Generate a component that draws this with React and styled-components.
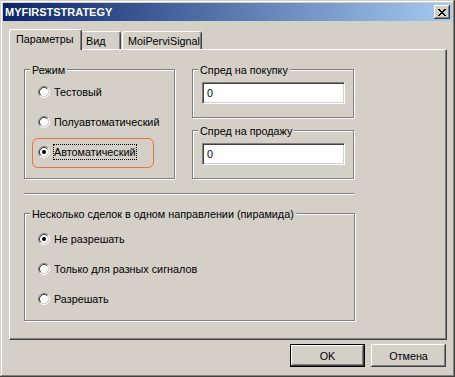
import React from 'react';
import styled, { createGlobalStyle } from 'styled-components';

const GlobalStyle = createGlobalStyle`
  html, body {
    margin: 0;
    padding: 0;
    background: #D4D0C8;
  }
  body {
    font-family: "Liberation Sans", "DejaVu Sans", Arial, sans-serif;
    font-size: 10.8px;
    color: #000;
  }
`;

const Window = styled.div`
  width: 455px;
  height: 377px;
  box-sizing: border-box;
  padding: 3px;
  background: #D4D0C8;
  display: flex;
  flex-direction: column;
  box-shadow: inset -1px -1px #404040, inset 1px 1px #D4D0C8,
    inset -2px -2px #808080, inset 2px 2px #fff;
`;

const TitleBar = styled.div`
  height: 18px;
  display: flex;
  align-items: center;
  justify-content: space-between;
  padding: 0 2px 0 2px;
  background: linear-gradient(to right, #0A246A, #A6CAF0);
`;

const Title = styled.span`
  color: #fff;
  font-weight: bold;
  font-size: 11px;
  line-height: 13px;
`;

const CloseBtn = styled.div`
  width: 16px;
  height: 14px;
  box-sizing: border-box;
  background: #D4D0C8;
  display: flex;
  align-items: center;
  justify-content: center;
  box-shadow: inset -1px -1px #404040, inset 1px 1px #fff,
    inset -2px -2px #808080;
`;

const Body = styled.div`
  display: flex;
  flex-direction: column;
  padding: 8px 5px 0 6px;
`;

const TabStrip = styled.div`
  display: flex;
  align-items: flex-end;
  height: 21px;
  margin-bottom: -1px;
  position: relative;
  z-index: 1;
`;

const Tab = styled.div`
  box-sizing: border-box;
  width: ${p => p.$w}px;
  height: ${p => (p.$active ? 21 : 18)}px;
  margin-bottom: ${p => (p.$active ? 0 : 1)}px;
  margin-right: ${p => p.$mr || 0}px;
  padding: 3px 0 0 ${p => (p.$active ? 6 : 5)}px;
  line-height: 13px;
  background: #D4D0C8;
  border-top: 1px solid #fff;
  border-left: 1px solid #fff;
  border-right: 1px solid #404040;
  border-radius: 3px 3px 0 0;
  box-shadow: inset -1px 0 #808080;
  position: relative;
  z-index: ${p => (p.$active ? 2 : 1)};
  white-space: nowrap;
`;

const Panel = styled.div`
  height: 291px;
  box-sizing: border-box;
  padding: 19px 0 0 14px;
  border-top: 1px solid #fff;
  border-left: 1px solid #fff;
  border-right: 1px solid #404040;
  border-bottom: 1px solid #404040;
  box-shadow: inset -1px -1px #808080;
  display: flex;
  flex-direction: column;
`;

const TopRow = styled.div`
  display: flex;
  gap: 17px;
`;

const Column = styled.div`
  display: flex;
  flex-direction: column;
  gap: 12px;
`;

const GroupBox = styled.div`
  position: relative;
  box-sizing: border-box;
  width: ${p => p.$w}px;
  height: ${p => p.$h}px;
  padding: ${p => p.$pad};
  border: 1px solid #808080;
  box-shadow: inset 1px 1px #fff, 1px 1px #fff;
`;

const Caption = styled.span`
  position: absolute;
  top: -6px;
  left: 5px;
  padding: 0 2px;
  line-height: 13px;
  background: #D4D0C8;
  white-space: nowrap;
`;

const RadioRow = styled.div`
  position: relative;
  display: flex;
  align-items: center;
  gap: 4px;
  height: 30px;
`;

const RadioLabel = styled.span`
  line-height: 13px;
  white-space: nowrap;
  padding-top: 1px;
  outline: ${p => (p.$focus ? '1px dotted #000' : 'none')};
`;

const Highlight = styled.div`
  position: absolute;
  left: -6px;
  top: 1px;
  width: 122px;
  height: 30px;
  box-sizing: border-box;
  border: 1.5px solid #F0703C;
  border-radius: 6px;
  pointer-events: none;
`;

const Field = styled.input`
  box-sizing: border-box;
  width: 143px;
  height: 22px;
  margin: 0;
  padding: 0 4px;
  font: inherit;
  color: #000;
  background: #fff;
  border-top: 1px solid #808080;
  border-left: 1px solid #808080;
  border-right: 1px solid #fff;
  border-bottom: 1px solid #fff;
  box-shadow: inset 1px 1px #404040, inset -1px -1px #D4D0C8;
  outline: none;
`;

const Separator = styled.div`
  width: 330px;
  height: 0;
  margin: 14px 0 18px;
  border-top: 1px solid #808080;
  border-bottom: 1px solid #fff;
`;

const ButtonRow = styled.div`
  display: flex;
  justify-content: flex-end;
  gap: 6px;
  margin-top: 4px;
  padding-right: 1px;
`;

const Button = styled.button`
  width: 75px;
  height: 23px;
  box-sizing: border-box;
  margin: 0;
  padding: 0;
  font: inherit;
  color: #000;
  background: #D4D0C8;
  border: ${p => (p.$default ? '1px solid #000' : 'none')};
  box-shadow: inset -1px -1px #404040, inset 1px 1px #fff,
    inset -2px -2px #808080;
`;

const X_PIXELS = [
  'XX....XX',
  '.XX..XX.',
  '..XXXX..',
  '...XX...',
  '..XXXX..',
  '.XX..XX.',
  'XX....XX',
];

function CloseIcon() {
  const rects = [];
  X_PIXELS.forEach((row, y) =>
    row.split('').forEach((c, x) => {
      if (c === 'X') rects.push(<rect key={`${x}-${y}`} x={x} y={y} width="1" height="1" />);
    })
  );
  return (
    <svg width="8" height="7" viewBox="0 0 8 7" shapeRendering="crispEdges" fill="#000">
      {rects}
    </svg>
  );
}

function RadioIcon({ checked }) {
  return (
    <svg width="12" height="12" viewBox="0 0 12 12">
      <circle cx="6" cy="6" r="4.2" fill="#fff" />
      <path d="M9.89 2.11 A5.5 5.5 0 0 0 2.11 9.89" fill="none" stroke="#808080" strokeWidth="1" />
      <path d="M2.11 9.89 A5.5 5.5 0 0 0 9.89 2.11" fill="none" stroke="#fff" strokeWidth="1" />
      <path d="M9.18 2.82 A4.5 4.5 0 0 0 2.82 9.18" fill="none" stroke="#404040" strokeWidth="1" />
      <path d="M2.82 9.18 A4.5 4.5 0 0 0 9.18 2.82" fill="none" stroke="#D4D0C8" strokeWidth="1" />
      {checked && <circle cx="6" cy="6" r="2" fill="#000" />}
    </svg>
  );
}

function Radio({ label, checked, focus, highlight }) {
  return (
    <RadioRow>
      <RadioIcon checked={checked} />
      <RadioLabel $focus={focus}>{label}</RadioLabel>
      {highlight && <Highlight />}
    </RadioRow>
  );
}

export default function App() {
  return (
    <>
      <GlobalStyle />
      <Window>
        <TitleBar>
          <Title>MYFIRSTSTRATEGY</Title>
          <CloseBtn><CloseIcon /></CloseBtn>
        </TitleBar>
        <Body>
          <TabStrip>
            <Tab $active $w={73} $mr={-2}>Параметры</Tab>
            <Tab $w={41} $mr={1}>Вид</Tab>
            <Tab $w={80}>MoiPerviSignal</Tab>
          </TabStrip>
          <Panel>
            <TopRow>
              <GroupBox $w={151} $h={110} $pad="7px 0 0 13px">
                <Caption>Режим</Caption>
                <Radio label="Тестовый" />
                <Radio label="Полуавтоматический" />
                <Radio label="Автоматический" checked focus highlight />
              </GroupBox>
              <Column>
                <GroupBox $w={162} $h={49} $pad="12px 0 0 9px">
                  <Caption>Спред на покупку</Caption>
                  <Field readOnly value="0" />
                </GroupBox>
                <GroupBox $w={162} $h={49} $pad="12px 0 0 9px">
                  <Caption>Спред на продажу</Caption>
                  <Field readOnly value="0" />
                </GroupBox>
              </Column>
            </TopRow>
            <Separator />
            <GroupBox $w={331} $h={108} $pad="10px 0 0 13px">
              <Caption>Несколько сделок в одном направлении (пирамида)</Caption>
              <Radio label="Не разрешать" checked />
              <Radio label="Только для разных сигналов" />
              <Radio label="Разрешать" />
            </GroupBox>
          </Panel>
          <ButtonRow>
            <Button $default>OK</Button>
            <Button>Отмена</Button>
          </ButtonRow>
        </Body>
      </Window>
    </>
  );
}
